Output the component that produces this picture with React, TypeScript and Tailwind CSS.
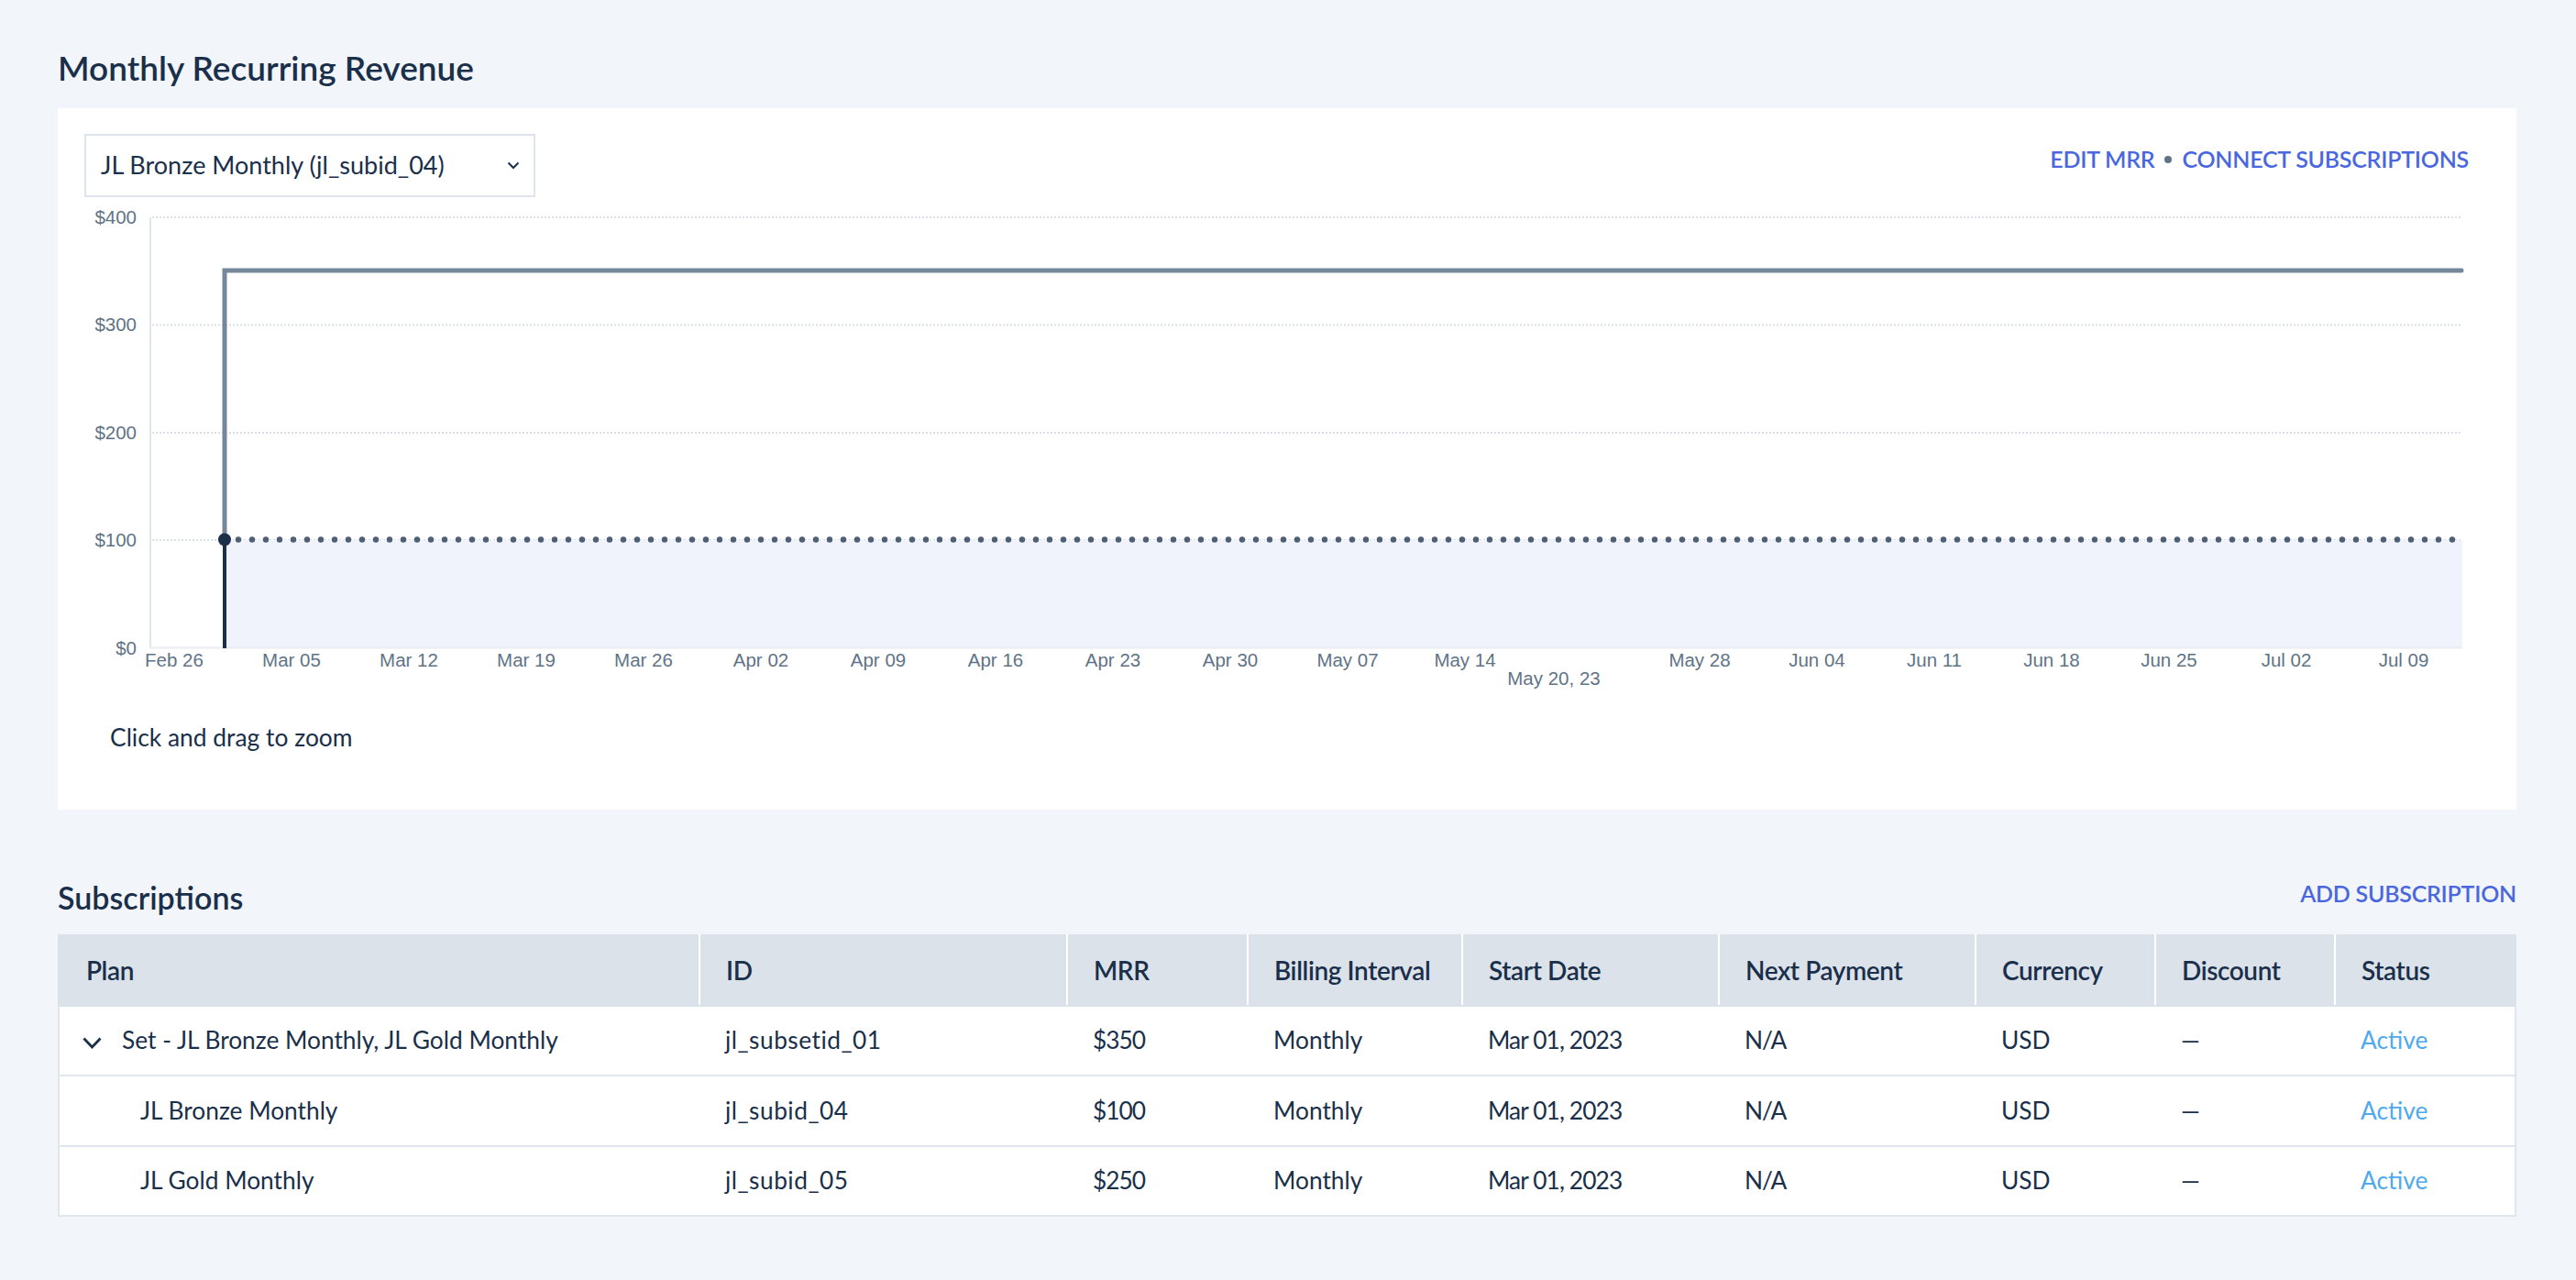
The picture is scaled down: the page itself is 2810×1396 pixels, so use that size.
import React from 'react';

const yLabels = ['$400', '$300', '$200', '$100', '$0'];

const xLabels: [string, number][] = [
  ['Feb 26', 190], ['Mar 05', 318], ['Mar 12', 446], ['Mar 19', 574], ['Mar 26', 702],
  ['Apr 02', 830], ['Apr 09', 958], ['Apr 16', 1086], ['Apr 23', 1214], ['Apr 30', 1342],
  ['May 07', 1470], ['May 14', 1598], ['May 28', 1854], ['Jun 04', 1982], ['Jun 11', 2110],
  ['Jun 18', 2238], ['Jun 25', 2366], ['Jul 02', 2494], ['Jul 09', 2622],
];

const rows = [
  { plan: 'Set - JL Bronze Monthly, JL Gold Monthly', id: 'jl_subsetid_01', mrr: '$350', parent: true, height: 'h-[76px]' },
  { plan: 'JL Bronze Monthly', id: 'jl_subid_04', mrr: '$100', parent: false, height: 'h-[77px]' },
  { plan: 'JL Gold Monthly', id: 'jl_subid_05', mrr: '$250', parent: false, height: 'h-[76px]' },
];

const headers = ['Plan', 'ID', 'MRR', 'Billing Interval', 'Start Date', 'Next Payment', 'Currency', 'Discount', 'Status'];

const headColumns = 'grid grid-cols-[701px_401px_197px_234px_280px_280px_196px_196px_197px]';
const bodyColumns = 'grid grid-cols-[699px_401px_197px_234px_280px_280px_196px_196px_195px]';

// SVG origin sits at the card's left edge (x 63) and y 220 of the page
const MrrChart = () => {
  const dots = [];
  for (let x = 260; x < 2686; x += 15) dots.push(x);
  return (
    <svg width="2682" height="550" viewBox="63 220 2682 550" className="block" fontFamily="'Liberation Sans', Arial, sans-serif">
      {[237, 354.5, 472, 589].map((y) => (
        <line key={y} x1="166" x2="2686" y1={y} y2={y} stroke="#d9dfe8" strokeWidth="2" strokeDasharray="2 2" />
      ))}
      <rect x="245" y="589" width="2441" height="117" fill="#f0f3fc" />
      <line x1="164" x2="164" y1="237" y2="707" stroke="#e1e6ee" strokeWidth="2" />
      <line x1="163" x2="2686" y1="706.5" y2="706.5" stroke="#e9ecf3" strokeWidth="2" />
      <path d="M245 589V295H2685" fill="none" stroke="#75879a" strokeWidth="5" strokeLinecap="round" />
      <line x1="245" x2="245" y1="589" y2="707" stroke="#1a3049" strokeWidth="4" />
      {dots.map((x) => (
        <circle key={x} cx={x} cy="588.5" r="3.2" fill="#4f6075" />
      ))}
      <circle cx="245" cy="588.5" r="7" fill="#1a3049" />
      {yLabels.map((label, i) => (
        <text key={label} x="149" y={237 + i * 117.4 + 7} textAnchor="end" fontSize="20.5" fill="#5f7487">{label}</text>
      ))}
      {xLabels.map(([label, x]) => (
        <text key={label} x={x} y="727" textAnchor="middle" fontSize="20.5" fill="#5f7487">{label}</text>
      ))}
      <text x="1695" y="747" textAnchor="middle" fontSize="20.5" fill="#5f7487">May 20, 23</text>
    </svg>
  );
};

const App = () => {
  return (
    <div className="w-[2810px] h-[1396px] bg-[#f2f5fa] px-[63px] pt-[50px] font-['Lato','Liberation_Sans',sans-serif] text-[#1a2f4a] overflow-hidden">
      <h1 className="h-[68px] text-[37px] leading-[48px] font-semibold">Monthly Recurring Revenue</h1>

      {/* Chart card */}
      <section className="bg-white h-[765px] w-[2682px]">
        <div className="flex justify-between items-start h-[102px] pt-[28px] pl-[29px] pr-[52px]">
          <div className="flex items-center justify-between w-[492px] h-[69px] border-2 border-[#dfe4ec] pl-[16px] pr-[15px] text-[27px]">
            <span>JL Bronze Monthly (jl_subid_04)</span>
            <svg width="14" height="9" viewBox="0 0 14 9" fill="none" stroke="#1a2f4a" strokeWidth="2"><path d="M1.5 1.5 7 7l5.5-5.5" /></svg>
          </div>
          <div className="flex items-center gap-[11px] h-[56px] text-[25px] font-semibold tracking-[-0.25px] text-[#4a67e0]">
            <span>EDIT MRR</span>
            <span className="w-[8px] h-[8px] rounded-full bg-[#5f7487]"></span>
            <span>CONNECT SUBSCRIPTIONS</span>
          </div>
        </div>
        <MrrChart />
        <p className="pl-[57px] mt-[14px] text-[26.4px] leading-[40px]">Click and drag to zoom</p>
      </section>

      {/* Subscriptions */}
      <div className="flex justify-between items-center h-[70px] mt-[66px] pb-[12px] pr-[2px]">
        <h2 className="text-[34px] font-semibold">Subscriptions</h2>
        <a className="text-[25px] font-semibold tracking-[-0.25px] text-[#4a67e0] mb-[6px]">ADD SUBSCRIPTION</a>
      </div>

      <div className="w-[2682px]">
        <div className={`${headColumns} h-[79px] bg-[#dce2ea]`}>
          {headers.map((h) => (
            <div key={h} className="h-[77px] flex items-center pl-[28px] first:pl-[31px] border-r-2 border-white last:border-r-0 text-[28px] font-semibold tracking-[-0.4px]">{h}</div>
          ))}
        </div>
        {rows.map((row) => (
          <div key={row.id} className={`${bodyColumns} ${row.height} bg-white border-x-2 border-b-2 border-[#e0e5ee] text-[26.3px] items-center`}>
            <div className="flex items-center">
              {row.parent ? (
                <>
                  <svg className="ml-[25px] mr-[22px] mt-[4px]" width="21" height="13" viewBox="0 0 21 13" fill="none" stroke="#1a2f4a" strokeWidth="2.8"><path d="M1.5 1.5 10.5 11l9-9.5" /></svg>
                  <span>{row.plan}</span>
                </>
              ) : (
                <span className="pl-[88px]">{row.plan}</span>
              )}
            </div>
            <div className="pl-[27px] tracking-[0.5px]">{row.id}</div>
            <div className="pl-[27px] tracking-[-1px]">{row.mrr}</div>
            <div className="pl-[27px]">Monthly</div>
            <div className="pl-[27px] tracking-[-0.9px]">Mar 01, 2023</div>
            <div className="pl-[27px] tracking-[-1px]">N/A</div>
            <div className="pl-[27px]">USD</div>
            <div className="pl-[27px]">—</div>
            <div className="pl-[27px] text-[#4fa9ee]">Active</div>
          </div>
        ))}
      </div>
    </div>
  );
};

export default App;
